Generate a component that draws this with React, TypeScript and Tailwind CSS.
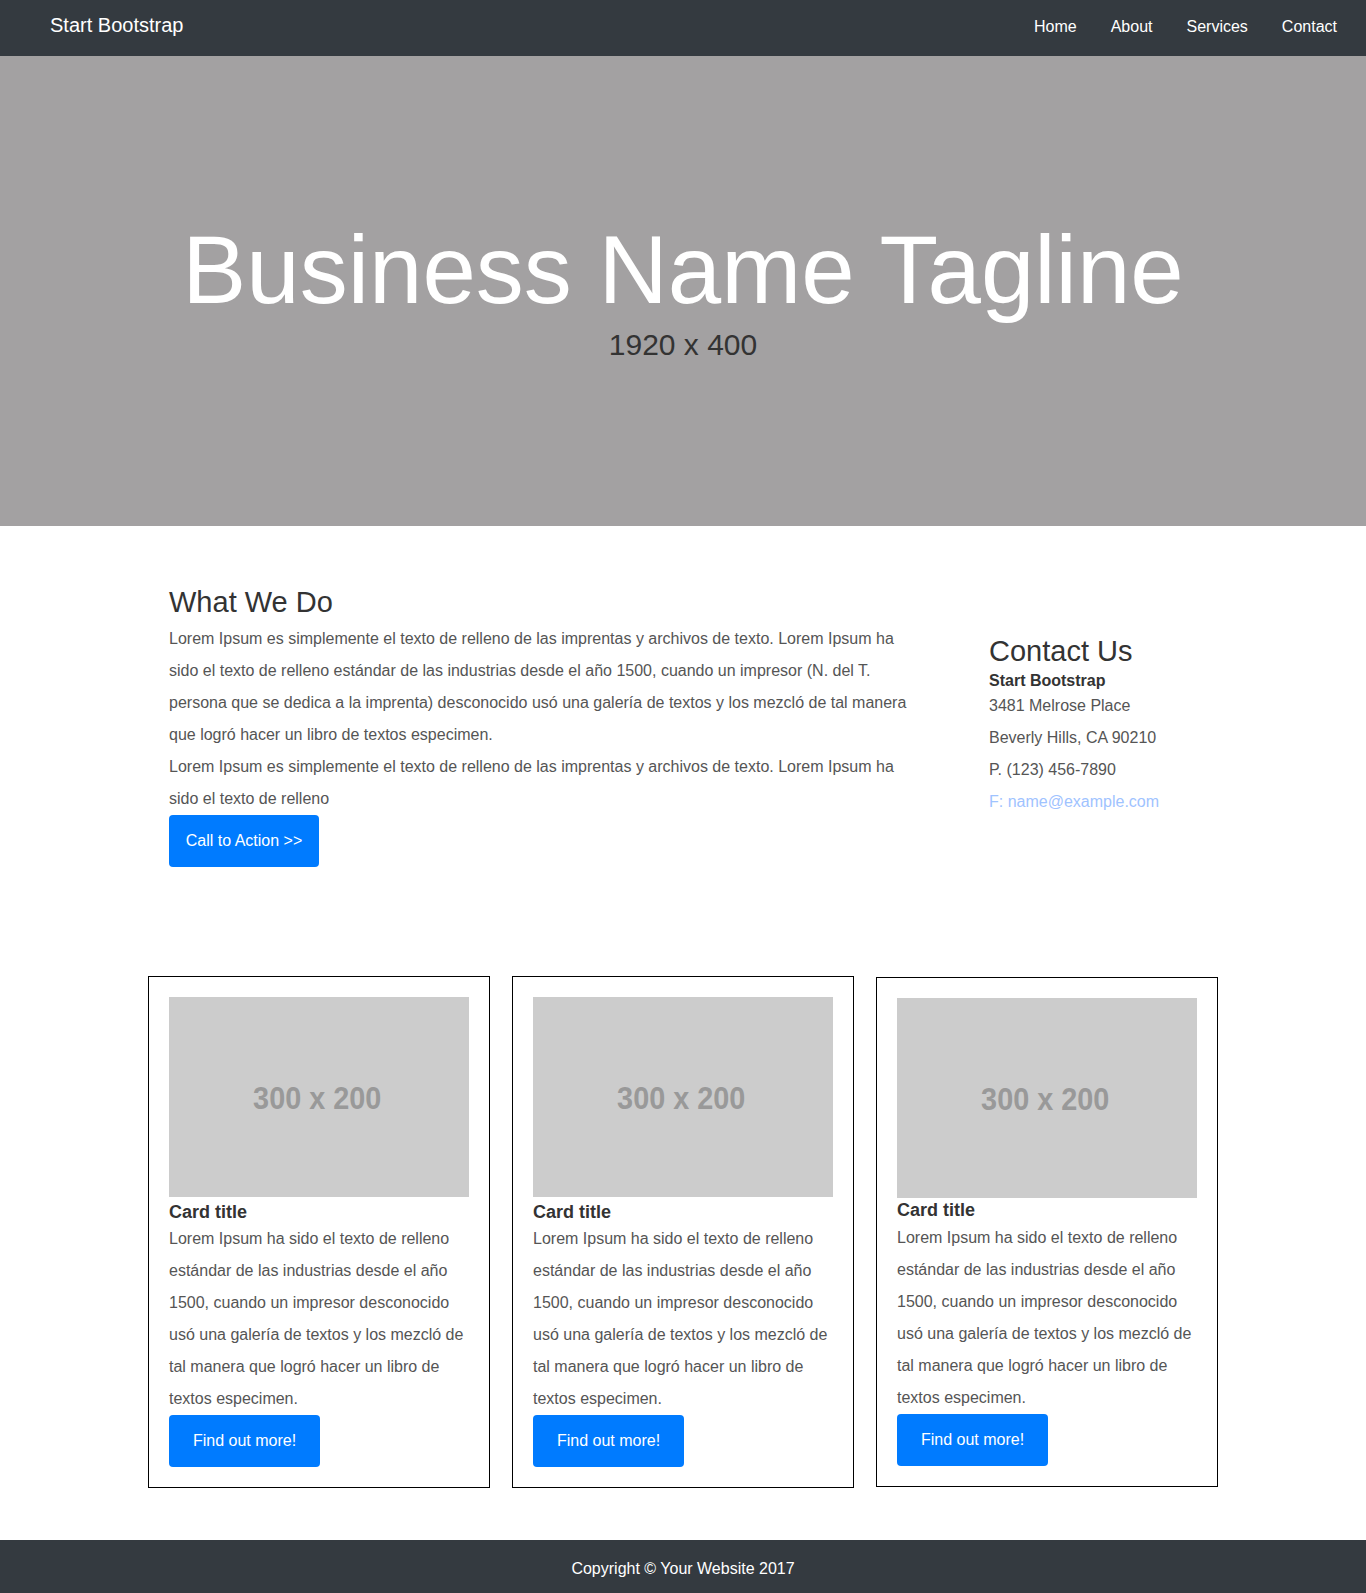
import React from "react";

const font = { fontFamily: '"Liberation Sans", Arial, Helvetica, sans-serif' };

function Card({ tight }: { tight?: boolean }) {
  return (
    <div className="w-[342px] border border-black bg-white p-5 flex flex-col">
      <div className="w-[300px] h-[200px] bg-[#cccccc] flex items-center justify-center">
        <span className="text-[32px] font-bold text-[#999999] scale-x-[0.9] leading-none mt-[2px] mr-[4px]">300 x 200</span>
      </div>
      <h5 className={`${tight ? "mt-[2px]" : "mt-[5px]"} text-[18px] leading-[1.2] font-bold text-[#333333]`}>Card title</h5>
      <p className="text-[16px] leading-[32px] text-[#555555]">
        Lorem Ipsum ha sido el texto de relleno estándar de las industrias desde el año 1500, cuando un impresor desconocido usó una galería de textos y los mezcló de tal manera que logró hacer un libro de textos especimen.
      </p>
      <div>
        <button className="w-[151px] h-[52px] rounded-[4px] bg-[#007bff] text-white text-[16px] flex items-center justify-center">
          Find out more!
        </button>
      </div>
    </div>
  );
}

export default function App() {
  return (
    <div style={font} className="w-full bg-white">
      <nav className="h-[56px] bg-[#343a40] flex items-center justify-between pl-[50px] pr-[29px]">
        <a className="text-white text-[20px] mb-[6px]">Start Bootstrap</a>
        <div className="flex items-center gap-[34px] mb-[2px] text-white text-[16px]">
          <a>Home</a>
          <a>About</a>
          <a>Services</a>
          <a>Contact</a>
        </div>
      </nav>

      <header className="h-[470px] bg-[#a3a1a2] flex flex-col items-center pt-[156px]">
        <h1 className="text-[96px] leading-[1.2] text-white">Business Name Tagline</h1>
        <p className="text-[30px] leading-[36px] text-[#333333]">1920 x 400</p>
      </header>

      <section className="w-[1070px] mx-auto pt-[59px] pl-[21px] flex items-start">
        <div className="w-[750px]">
          <h2 className="text-[29px] leading-[1.2] text-[#333333]">What We Do</h2>
          <p className="mt-[3px] text-[16px] leading-[32px] text-[#555555]">
            Lorem Ipsum es simplemente el texto de relleno de las imprentas y archivos de texto. Lorem Ipsum ha sido el texto de relleno estándar de las industrias desde el año 1500, cuando un impresor (N. del T. persona que se dedica a la imprenta) desconocido usó una galería de textos y los mezcló de tal manera que logró hacer un libro de textos especimen.
          </p>
          <p className="text-[16px] leading-[32px] text-[#555555]">
            Lorem Ipsum es simplemente el texto de relleno de las imprentas y archivos de texto. Lorem Ipsum ha sido el texto de relleno
          </p>
          <button className="w-[150px] h-[52px] rounded-[4px] bg-[#007bff] text-white text-[16px] flex items-center justify-center">
            Call to Action &gt;&gt;
          </button>
        </div>
        <div className="ml-[70px] mt-[49px]">
          <h2 className="text-[29px] leading-[1.2] text-[#333333]">Contact Us</h2>
          <strong className="block mt-[2px] text-[16px] leading-[20px] font-bold text-[#333333]">Start Bootstrap</strong>
          <p className="-mt-[1px] text-[16px] leading-[32px] text-[#555555]">3481 Melrose Place</p>
          <p className="text-[16px] leading-[32px] text-[#555555]">Beverly Hills, CA 90210</p>
          <p className="text-[16px] leading-[32px] text-[#555555]">P. (123) 456-7890</p>
          <p className="text-[16px] leading-[32px] text-[#9fc3ff]">F: name@example.com</p>
        </div>
      </section>

      <section className="w-[1070px] mx-auto mt-[109px] pb-[52px] flex items-center gap-[22px]">
        <Card />
        <Card />
        <Card tight />
      </section>

      <footer className="h-[53px] bg-[#343a40] flex items-center justify-center pt-[4px]">
        <p className="text-white text-[16px]">Copyright © Your Website 2017</p>
      </footer>
    </div>
  );
}
